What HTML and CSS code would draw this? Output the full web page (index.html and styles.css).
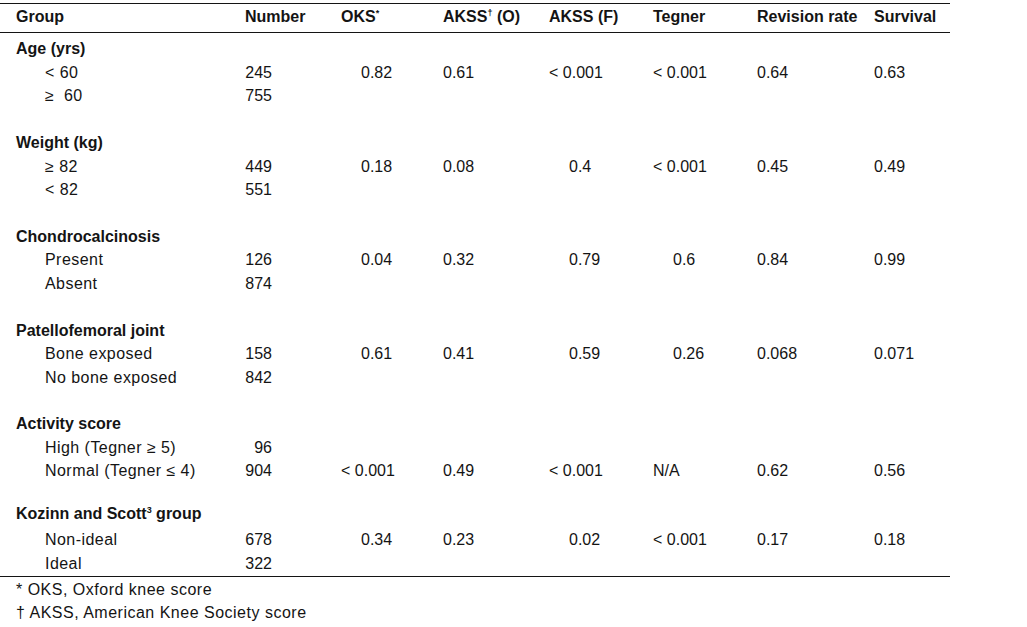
FILE: index.html
```html
<!DOCTYPE html>
<html>
<head>
<meta charset="utf-8">
<link rel="stylesheet" href="styles.css">
</head>
<body>
<div class="table">
  <div class="row head">
    <div class="c lab">Group</div>
    <div class="c">Number</div>
    <div class="c">OKS<sup>*</sup></div>
    <div class="c">AKSS<sup>†</sup> (O)</div>
    <div class="c">AKSS (F)</div>
    <div class="c">Tegner</div>
    <div class="c">Revision rate</div>
    <div class="c">Survival</div>
  </div>
  <div class="body">
    <div class="row grp"><div class="c lab">Age (yrs)</div></div>
    <div class="row">
      <div class="c sub">&lt; 60</div><div class="c num">245</div>
      <div class="c pad">0.82</div><div class="c">0.61</div>
      <div class="c">&lt; 0.001</div><div class="c">&lt; 0.001</div>
      <div class="c">0.64</div><div class="c">0.63</div>
    </div>
    <div class="row"><div class="c sub">≥&nbsp; 60</div><div class="c num">755</div></div>
    <div class="row gap"></div>

    <div class="row grp"><div class="c lab">Weight (kg)</div></div>
    <div class="row">
      <div class="c sub">≥ 82</div><div class="c num">449</div>
      <div class="c pad">0.18</div><div class="c">0.08</div>
      <div class="c pad">0.4</div><div class="c">&lt; 0.001</div>
      <div class="c">0.45</div><div class="c">0.49</div>
    </div>
    <div class="row"><div class="c sub">&lt; 82</div><div class="c num">551</div></div>
    <div class="row gap"></div>

    <div class="row grp"><div class="c lab">Chondrocalcinosis</div></div>
    <div class="row">
      <div class="c sub">Present</div><div class="c num">126</div>
      <div class="c pad">0.04</div><div class="c">0.32</div>
      <div class="c pad">0.79</div><div class="c pad">0.6</div>
      <div class="c">0.84</div><div class="c">0.99</div>
    </div>
    <div class="row"><div class="c sub">Absent</div><div class="c num">874</div></div>
    <div class="row gap"></div>

    <div class="row grp"><div class="c lab">Patellofemoral joint</div></div>
    <div class="row">
      <div class="c sub">Bone exposed</div><div class="c num">158</div>
      <div class="c pad">0.61</div><div class="c">0.41</div>
      <div class="c pad">0.59</div><div class="c pad">0.26</div>
      <div class="c">0.068</div><div class="c">0.071</div>
    </div>
    <div class="row"><div class="c sub">No bone exposed</div><div class="c num">842</div></div>
    <div class="row gap"></div>

    <div class="row grp"><div class="c lab">Activity score</div></div>
    <div class="row"><div class="c sub">High (Tegner ≥ 5)</div><div class="c num">96</div></div>
    <div class="row">
      <div class="c sub">Normal (Tegner ≤ 4)</div><div class="c num">904</div>
      <div class="c">&lt; 0.001</div><div class="c">0.49</div>
      <div class="c">&lt; 0.001</div><div class="c">N/A</div>
      <div class="c">0.62</div><div class="c">0.56</div>
    </div>
    <div class="row gap short"></div>

    <div class="row grp tall"><div class="c lab">Kozinn and Scott<sup>3</sup> group</div></div>
    <div class="row">
      <div class="c sub">Non-ideal</div><div class="c num">678</div>
      <div class="c pad">0.34</div><div class="c">0.23</div>
      <div class="c pad">0.02</div><div class="c">&lt; 0.001</div>
      <div class="c">0.17</div><div class="c">0.18</div>
    </div>
    <div class="row"><div class="c sub">Ideal</div><div class="c num">322</div></div>
  </div>
</div>
<div class="notes">
  <p>* OKS, Oxford knee score</p>
  <p>† AKSS, American Knee Society score</p>
</div>
</body>
</html>
```
FILE: styles.css
```css
html, body {
  margin: 0;
  padding: 0;
  background: #fff;
}
body {
  font-family: "Liberation Sans", Arial, sans-serif;
  font-size: 16px;
  color: #141414;
}
.table {
  width: 950px;
  margin-top: 3px;
  border-top: 1px solid #141414;
  border-bottom: 1px solid #141414;
}
.row {
  display: grid;
  grid-template-columns: 245px 96px 102px 106px 104px 104px 117px 76px;
  height: 23.45px;
  line-height: 23.45px;
  white-space: nowrap;
}
.head {
  height: 29px;
  line-height: 23px;
  padding-top: 0.5px;
  box-sizing: border-box;
  font-weight: bold;
  border-bottom: 1px solid #141414;
}
.head .c { letter-spacing: 0; }
.body {
  padding-top: 4.4px;
  padding-bottom: 1px;
}
.grp .c {
  grid-column: 1 / -1;
}
.lab {
  padding-left: 16px;
  font-weight: bold;
}
.sub {
  padding-left: 45px;
  letter-spacing: 0.45px;
}
.num {
  width: 27px;
  text-align: right;
}
.pad {
  padding-left: 20px;
}
.gap.short {
  height: 19.5px;
}
.grp.tall {
  height: 26px;
  line-height: 23.45px;
}
sup {
  font-size: 9px;
  line-height: 0;
  vertical-align: 6px;
}
.notes {
  padding-top: 1px;
  padding-left: 16px;
  letter-spacing: 0.5px;
}
.notes p {
  margin: 0;
  height: 23px;
  line-height: 23px;
}
```
